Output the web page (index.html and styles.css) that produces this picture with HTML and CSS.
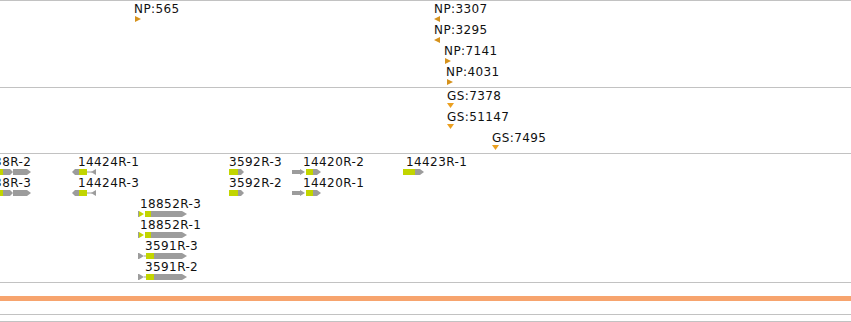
FILE: index.html
```html
<!DOCTYPE html>
<html>
<head>
<meta charset="utf-8">
<link rel="stylesheet" href="styles.css">
</head>
<body>
<div class="view">
  <div class="track track-np">
    <div class="feat" style="left:134px;top:1px"><div class="label">NP:565</div><svg class="mark" width="6" height="6" style="margin-left:1px"><polygon class="np" points="0,0 6,3 0,6"/></svg></div>
    <div class="feat" style="left:434px;top:1px"><div class="label">NP:3307</div><svg class="mark" width="6" height="6" style="margin-left:0px"><polygon class="np" points="6,0 0,3 6,6"/></svg></div>
    <div class="feat" style="left:434px;top:22px"><div class="label">NP:3295</div><svg class="mark" width="6" height="6" style="margin-left:0px"><polygon class="np" points="6,0 0,3 6,6"/></svg></div>
    <div class="feat" style="left:444px;top:43px"><div class="label">NP:7141</div><svg class="mark" width="6" height="6" style="margin-left:1px"><polygon class="np" points="0,0 6,3 0,6"/></svg></div>
    <div class="feat" style="left:446px;top:64px"><div class="label">NP:4031</div><svg class="mark" width="6" height="6" style="margin-left:1px"><polygon class="np" points="0,0 6,3 0,6"/></svg></div>
  </div>
  <div class="track track-gs">
    <div class="feat" style="left:447px;top:1px"><div class="label">GS:7378</div><svg class="mark" width="7" height="5" style="margin-left:0px"><polygon class="gs" points="0,0 7,0 3.5,5"/></svg></div>
    <div class="feat" style="left:447px;top:22px"><div class="label">GS:51147</div><svg class="mark" width="7" height="5" style="margin-left:0px"><polygon class="gs" points="0,0 7,0 3.5,5"/></svg></div>
    <div class="feat" style="left:492px;top:43px"><div class="label">GS:7495</div><svg class="mark" width="7" height="5" style="margin-left:0px"><polygon class="gs" points="0,0 7,0 3.5,5"/></svg></div>
  </div>
  <div class="track track-genes">
    <!-- row 1 -->
    <div class="feat" style="left:-30px;top:1px"><div class="label">14438R-2</div>
      <svg class="gene" width="31" height="6" style="margin-left:30px"><rect class="cds" x="0" y="0" width="3" height="6"/><polygon class="utr" points="3,0 10,0 13,3 10,6 3,6"/><polygon class="utr" points="13,0 27,0 31,3 27,6 13,6"/></svg></div>
    <div class="feat" style="left:78px;top:1px"><div class="label">14424R-1</div>
      <svg class="gene" width="25" height="6" style="margin-left:-6px"><polygon class="utr" points="0,3 3,0 7,0 7,6 3,6"/><rect class="cds" x="7" y="0" width="8" height="6"/><rect class="utr" x="15" y="2.5" width="5" height="1"/><polygon class="utr" points="19,3 24,0 24,6"/></svg></div>
    <div class="feat" style="left:229px;top:1px"><div class="label">3592R-3</div>
      <svg class="gene" width="15" height="6" style="margin-left:0px"><rect class="cds" x="0" y="0" width="9" height="6"/><polygon class="utr" points="9,0 12,0 15,3 12,6 9,6"/></svg></div>
    <div class="feat" style="left:303px;top:1px"><div class="label">14420R-2</div>
      <svg class="gene" width="29" height="6" style="margin-left:-11px"><polygon class="utr" points="0,1 8,1 8,0 13,3 8,6 8,5 0,5"/><rect class="cds" x="14" y="0" width="7" height="6"/><polygon class="utr" points="21,0 25,0 29,3 25,6 21,6"/></svg></div>
    <div class="feat" style="left:406px;top:1px"><div class="label">14423R-1</div>
      <svg class="gene" width="21" height="6" style="margin-left:-3px"><rect class="cds" x="0" y="0" width="12" height="6"/><polygon class="utr" points="12,0 17,0 21,3 17,6 12,6"/></svg></div>
    <!-- row 2 -->
    <div class="feat" style="left:-30px;top:22px"><div class="label">14438R-3</div>
      <svg class="gene" width="31" height="6" style="margin-left:30px"><rect class="cds" x="0" y="0" width="3" height="6"/><polygon class="utr" points="3,0 10,0 13,3 10,6 3,6"/><polygon class="utr" points="13,0 27,0 31,3 27,6 13,6"/></svg></div>
    <div class="feat" style="left:78px;top:22px"><div class="label">14424R-3</div>
      <svg class="gene" width="25" height="6" style="margin-left:-6px"><polygon class="utr" points="0,3 3,0 7,0 7,6 3,6"/><rect class="cds" x="7" y="0" width="8" height="6"/><rect class="utr" x="15" y="2.5" width="5" height="1"/><polygon class="utr" points="19,3 24,0 24,6"/></svg></div>
    <div class="feat" style="left:229px;top:22px"><div class="label">3592R-2</div>
      <svg class="gene" width="15" height="6" style="margin-left:0px"><rect class="cds" x="0" y="0" width="9" height="6"/><polygon class="utr" points="9,0 12,0 15,3 12,6 9,6"/></svg></div>
    <div class="feat" style="left:303px;top:22px"><div class="label">14420R-1</div>
      <svg class="gene" width="29" height="6" style="margin-left:-11px"><polygon class="utr" points="0,1 8,1 8,0 13,3 8,6 8,5 0,5"/><rect class="cds" x="14" y="0" width="7" height="6"/><polygon class="utr" points="21,0 25,0 29,3 25,6 21,6"/></svg></div>
    <!-- rows 3-6 -->
    <div class="feat" style="left:140px;top:43px"><div class="label">18852R-3</div>
      <svg class="gene" width="49" height="6" style="margin-left:-2px"><rect class="utr" x="0" y="0" width="1" height="6"/><polygon class="cds" points="1,0 6,3 1,6"/><rect class="cds" x="7" y="0" width="6" height="6"/><polygon class="utr" points="13,0 44,0 49,3 44,6 13,6"/></svg></div>
    <div class="feat" style="left:140px;top:64px"><div class="label">18852R-1</div>
      <svg class="gene" width="49" height="6" style="margin-left:-2px"><rect class="utr" x="0" y="0" width="1" height="6"/><polygon class="cds" points="1,0 6,3 1,6"/><rect class="cds" x="7" y="0" width="6" height="6"/><polygon class="utr" points="13,0 44,0 49,3 44,6 13,6"/></svg></div>
    <div class="feat" style="left:145px;top:85px"><div class="label">3591R-3</div>
      <svg class="gene" width="49" height="6" style="margin-left:-7px"><rect class="utr" x="0" y="0" width="1" height="6"/><polygon class="utr" points="1,0 6,3 1,6"/><rect class="utr" x="6" y="2.5" width="3" height="1"/><rect class="cds" x="8" y="0" width="8" height="6"/><polygon class="utr" points="16,0 44,0 49,3 44,6 16,6"/></svg></div>
    <div class="feat" style="left:145px;top:106px"><div class="label">3591R-2</div>
      <svg class="gene" width="49" height="6" style="margin-left:-7px"><rect class="utr" x="0" y="0" width="1" height="6"/><polygon class="utr" points="1,0 6,3 1,6"/><rect class="utr" x="6" y="2.5" width="3" height="1"/><rect class="cds" x="8" y="0" width="8" height="6"/><polygon class="utr" points="16,0 44,0 49,3 44,6 16,6"/></svg></div>
  </div>
  <div class="ruler">
    <div class="band"></div>
    <div class="scale"></div>
  </div>
</div>
</body>
</html>
```
FILE: styles.css
```css
html, body {
  margin: 0;
  padding: 0;
  background: #ffffff;
}
.view {
  width: 851px;
  height: 322px;
  overflow: hidden;
  font-family: "DejaVu Sans", Verdana, sans-serif;
  font-size: 12px;
  letter-spacing: 0.4px;
  color: #111111;
}
.track {
  position: relative;
  box-sizing: border-box;
  border-top: 1px solid #c2c2c2;
  overflow: hidden;
}
.track-np { height: 87px; }
.track-gs { height: 66px; }
.track-genes { height: 129px; }
.feat {
  position: absolute;
  display: flex;
  flex-direction: column;
  align-items: flex-start;
}
.label {
  line-height: 14px;
  white-space: nowrap;
}
.mark, .gene {
  display: block;
}
.np { fill: #d6921c; }
.gs { fill: #eba021; }
.cds { fill: #c2d500; }
.utr { fill: #9c9c9c; }
.ruler {
  box-sizing: border-box;
  height: 40px;
  border-top: 1px solid #c2c2c2;
  padding-top: 13px;
}
.band {
  height: 5px;
  background: #f7a46e;
}
.scale {
  box-sizing: border-box;
  margin-top: 13px;
  height: 8px;
  border-top: 1px solid #c2c2c2;
  border-bottom: 1px solid #c2c2c2;
}
```
